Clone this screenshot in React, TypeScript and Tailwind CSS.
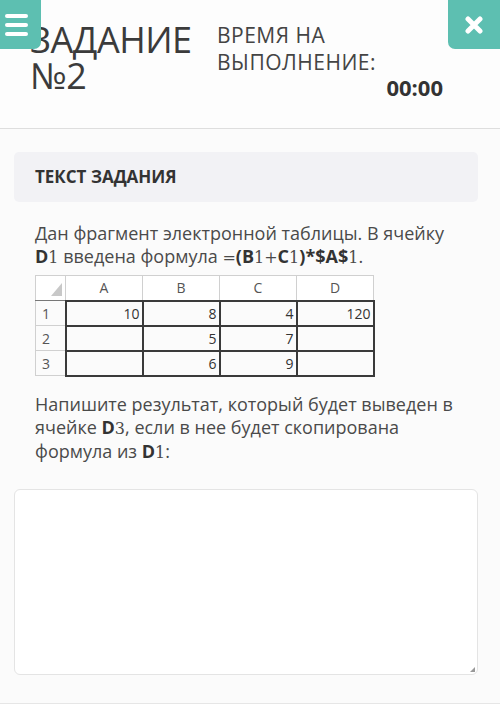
import React from 'react';

const M = ({ children }: { children: React.ReactNode }) => (
  <span className="font-['DejaVu_Serif',serif] text-[16px] font-normal">{children}</span>
);

const B = ({ children }: { children: React.ReactNode }) => <span className="font-bold text-[#333]">{children}</span>;

const cols = ['A', 'B', 'C', 'D'];
const rows = [
  ['10', '8', '4', '120'],
  ['', '5', '7', ''],
  ['', '6', '9', ''],
];

const Sheet = () => (
  <table className="border-collapse font-['Open_Sans',sans-serif] text-[14px] text-[#333] mt-[6px]">
    <thead>
      <tr className="h-[25px]">
        <th className="w-[30px] border border-[#d0d0d0] border-b-[#777] bg-white p-0 relative">
          <span className="absolute right-[3px] bottom-[4px] w-0 h-0 border-l-[11px] border-l-transparent border-b-[13px] border-b-[#c8c8c8]" />
        </th>
        {cols.map((c) => (
          <th key={c} className="w-[77px] border border-[#d0d0d0] border-b-[#555] bg-white font-normal text-[#555] p-0">
            {c}
          </th>
        ))}
      </tr>
    </thead>
    <tbody>
      {rows.map((r, i) => (
        <tr key={i} className="h-[24px]">
          <td className="border border-[#d0d0d0] text-[#555] text-left pl-[6px] py-0">{i + 1}</td>
          {r.map((v, j) => (
            <td key={j} className="border-2 border-[#3a3a3a] text-right pr-[2px] py-0">
              {v}
            </td>
          ))}
        </tr>
      ))}
    </tbody>
  </table>
);

export default function App() {
  return (
    <div className="w-[500px] h-[725px] bg-[#fbfbfb] font-['Open_Sans',sans-serif] overflow-hidden relative">
      {/* header */}
      <div className="h-[129px] bg-[#fdfdfd] border-b border-[#dedede] flex pl-[30px] pt-[22px]">
        <div className="w-[187px] text-[36px] leading-[36px] text-[#3b3b3b] tracking-[-0.5px]">
          <div>ЗАДАНИЕ</div>
          <div>№2</div>
        </div>
        <div className="w-[226px] text-[21px] leading-[27px] tracking-[0.5px] text-[#444]">
          <div>ВРЕМЯ НА</div>
          <div>ВЫПОЛНЕНИЕ:</div>
          <div className="text-right font-bold text-[22px] tracking-normal text-[#333] -mt-[2px]">00:00</div>
        </div>
      </div>

      <button className="absolute left-0 top-0 w-[41px] h-[49px] bg-[#5dbfb1] rounded-br-[7px] flex flex-col justify-center gap-[5px] pl-[5px]">
        <span className="block w-[23px] h-[4px] bg-white rounded-full" />
        <span className="block w-[23px] h-[4px] bg-white rounded-full" />
        <span className="block w-[23px] h-[4px] bg-white rounded-full" />
      </button>
      <button className="absolute right-0 top-0 w-[52px] h-[49px] bg-[#5dbfb1] rounded-bl-[7px] flex items-center justify-center">
        <svg width="18" height="18" viewBox="0 0 18 18">
          <path d="M3 3 L15 15 M15 3 L3 15" stroke="white" strokeWidth="5" strokeLinecap="round" />
        </svg>
      </button>

      {/* content */}
      <div className="pl-[14px] pr-[22px] pt-[23px]">
        <div className="h-[50px] bg-[#f2f2f5] rounded-[5px] flex items-center pl-[21px] text-[17px] font-bold text-[#333]">
          ТЕКСТ ЗАДАНИЯ
        </div>

        <div className="pl-[21px] pt-[20px] w-[441px] text-[18px] leading-[23px] text-[#4a4a4a]">
          <p>
            Дан фрагмент электронной таблицы. В ячейку <B>D</B>
            <M>1</M> введена формула <M>=</M>
            <B>(B</B>
            <M>1+</M>
            <B>C</B>
            <M>1</M>
            <B>)*$A$</B>
            <M>1</M>.
          </p>
          <Sheet />
          <p className="mt-[16px]">
            Напишите результат, который будет выведен в ячейке <B>D</B>
            <M>3</M>, если в нее будет скопирована формула из <B>D</B>
            <M>1</M>:
          </p>
        </div>

        <div className="mt-[25px] h-[186px] bg-white border border-[#e4e4e4] rounded-[6px] relative">
          <span className="absolute right-[2px] bottom-[2px] w-0 h-0 border-l-[5px] border-l-transparent border-b-[5px] border-b-[#999]" />
        </div>
      </div>

      <div className="absolute left-0 right-0 top-[703px] bottom-0 bg-white border-t border-[#e6e6e6]" />
    </div>
  );
}
